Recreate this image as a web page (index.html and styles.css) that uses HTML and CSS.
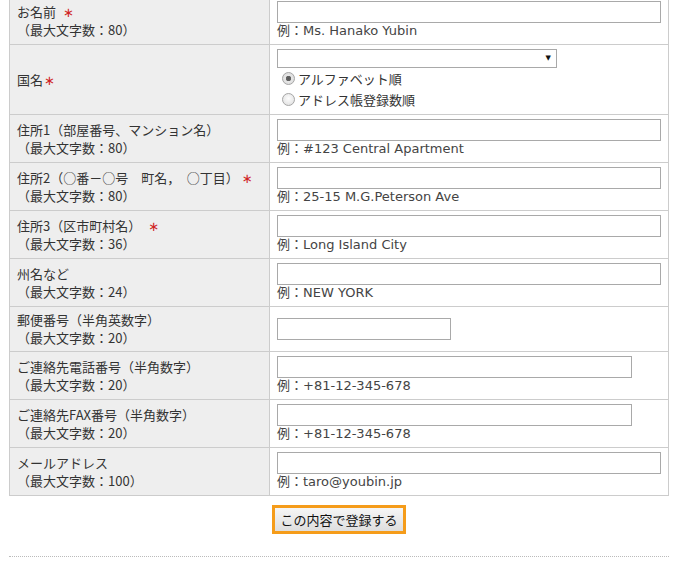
FILE: index.html
```html
<!DOCTYPE html>
<html lang="ja">
<head>
<meta charset="utf-8">
<link rel="stylesheet" href="styles.css">
</head>
<body>
<div class="page">
  <table class="form">
    <tr>
      <th class="label">お名前<span class="req gap">∗</span><br>（最大文字数：80）</th>
      <td class="value"><input class="field" type="text"><div class="ex">例：Ms. Hanako Yubin</div></td>
    </tr>
    <tr>
      <th class="label">国名<span class="req">∗</span></th>
      <td class="value value-country">
        <div class="select-wrap"><select class="select"><option></option></select><span class="arrow">▼</span></div>
        <label class="radio-line"><input class="radio" type="radio" name="order" checked>アルファベット順</label>
        <label class="radio-line"><input class="radio" type="radio" name="order">アドレス帳登録数順</label>
      </td>
    </tr>
    <tr>
      <th class="label">住所1（部屋番号、マンション名）<br>（最大文字数：80）</th>
      <td class="value"><input class="field" type="text"><div class="ex">例：#123 Central Apartment</div></td>
    </tr>
    <tr>
      <th class="label">住所2（○番－○号　町名，　○丁目）<span class="req gap-s">∗</span><br>（最大文字数：80）</th>
      <td class="value"><input class="field" type="text"><div class="ex">例：25-15 M.G.Peterson Ave</div></td>
    </tr>
    <tr>
      <th class="label">住所3（区市町村名）<span class="req gap">∗</span><br>（最大文字数：36）</th>
      <td class="value"><input class="field" type="text"><div class="ex">例：Long Island City</div></td>
    </tr>
    <tr>
      <th class="label">州名など<br>（最大文字数：24）</th>
      <td class="value"><input class="field" type="text"><div class="ex">例：NEW YORK</div></td>
    </tr>
    <tr>
      <th class="label">郵便番号（半角英数字）<br>（最大文字数：20）</th>
      <td class="value value-solo"><input class="field short" type="text"></td>
    </tr>
    <tr>
      <th class="label">ご連絡先電話番号（半角数字）<br>（最大文字数：20）</th>
      <td class="value"><input class="field mid" type="text"><div class="ex">例：+81-12-345-678</div></td>
    </tr>
    <tr>
      <th class="label">ご連絡先FAX番号（半角数字）<br>（最大文字数：20）</th>
      <td class="value"><input class="field mid" type="text"><div class="ex">例：+81-12-345-678</div></td>
    </tr>
    <tr>
      <th class="label">メールアドレス<br>（最大文字数：100）</th>
      <td class="value"><input class="field" type="text"><div class="ex">例：taro@youbin.jp</div></td>
    </tr>
  </table>
  <div class="actions">
    <button class="submit" type="button">この内容で登録する</button>
  </div>
  <div class="rule"></div>
</div>
</body>
</html>
```
FILE: styles.css
```css
html, body {
  margin: 0;
  padding: 0;
  background: #fff;
}
body {
  font-family: "DejaVu Sans", "Noto Sans CJK JP", sans-serif;
  font-size: 13px;
  color: #333;
}
.page {
  width: 660px;
  margin: -4px 0 0 9px;
}
.form {
  width: 660px;
  border-collapse: collapse;
  table-layout: fixed;
}
.label {
  width: 245px;
  background: #eeeeee;
  border: 1px solid #cccccc;
  padding: 0 7px;
  text-align: left;
  font-weight: normal;
  vertical-align: middle;
  line-height: 18px;
  font-family: "Noto Sans CJK JP", sans-serif;
  font-size: 13px;
  color: #333;
}
.req {
  color: #d02424;
  font-family: "DejaVu Sans", sans-serif;
  font-size: 13px;
  line-height: 0;
  margin-left: 1px;
}
.req.gap {
  margin-left: 7px;
}
.req.gap-s {
  margin-left: 3px;
}
.value {
  border: 1px solid #cccccc;
  padding: 4px 7px 3px 7px;
  vertical-align: middle;
  line-height: 18px;
}
.value-country {
  padding-bottom: 4px;
}
.value-solo {
  padding-top: 11px;
  padding-bottom: 11px;
}
.field {
  display: block;
  box-sizing: border-box;
  width: 384px;
  height: 22px;
  margin: 0;
  border: 1px solid #a9a9a9;
  background: #fff;
  padding: 0 4px;
  font: inherit;
}
.field.short { width: 174px; }
.field.mid { width: 355px; }
.ex {
  color: #444;
  height: 18px;
  line-height: 16px;
  font-size: 13px;
}
.select-wrap {
  position: relative;
  width: 280px;
  height: 19px;
}
.select {
  display: block;
  box-sizing: border-box;
  width: 280px;
  height: 19px;
  margin: 0;
  border: 1px solid #a9a9a9;
  background: #fff;
  -webkit-appearance: none;
  appearance: none;
  border-radius: 0;
}
.arrow {
  position: absolute;
  right: 6px;
  top: 0;
  font-size: 7px;
  line-height: 19px;
  color: #111;
}
.radio-line {
  display: flex;
  align-items: center;
  height: 21px;
  font-family: "Noto Sans CJK JP", sans-serif;
  font-size: 13px;
  color: #333;
}
.radio {
  -webkit-appearance: none;
  appearance: none;
  box-sizing: border-box;
  width: 13px;
  height: 13px;
  margin: 0 3px 0 5px;
  border: 1px solid #a6a6a6;
  border-radius: 50%;
  background: radial-gradient(circle at 50% 40%, #fdfdfd 0%, #dcdcdc 100%);
}
.radio:checked {
  background: radial-gradient(circle, #555 0, #666 2.5px, #e6e6e6 3px, #d8d8d8 100%);
}
.actions {
  display: flex;
  justify-content: center;
  padding-top: 9px;
}
.submit {
  box-sizing: border-box;
  width: 134px;
  height: 29px;
  border: 3px solid #f59c1a;
  background: linear-gradient(#f6f6f6, #dedede);
  font-family: "Noto Sans CJK JP", sans-serif;
  font-size: 13px;
  color: #111;
  padding: 0;
}
.rule {
  margin-top: 22px;
  border-top: 1px dotted #bbbbbb;
}
```
